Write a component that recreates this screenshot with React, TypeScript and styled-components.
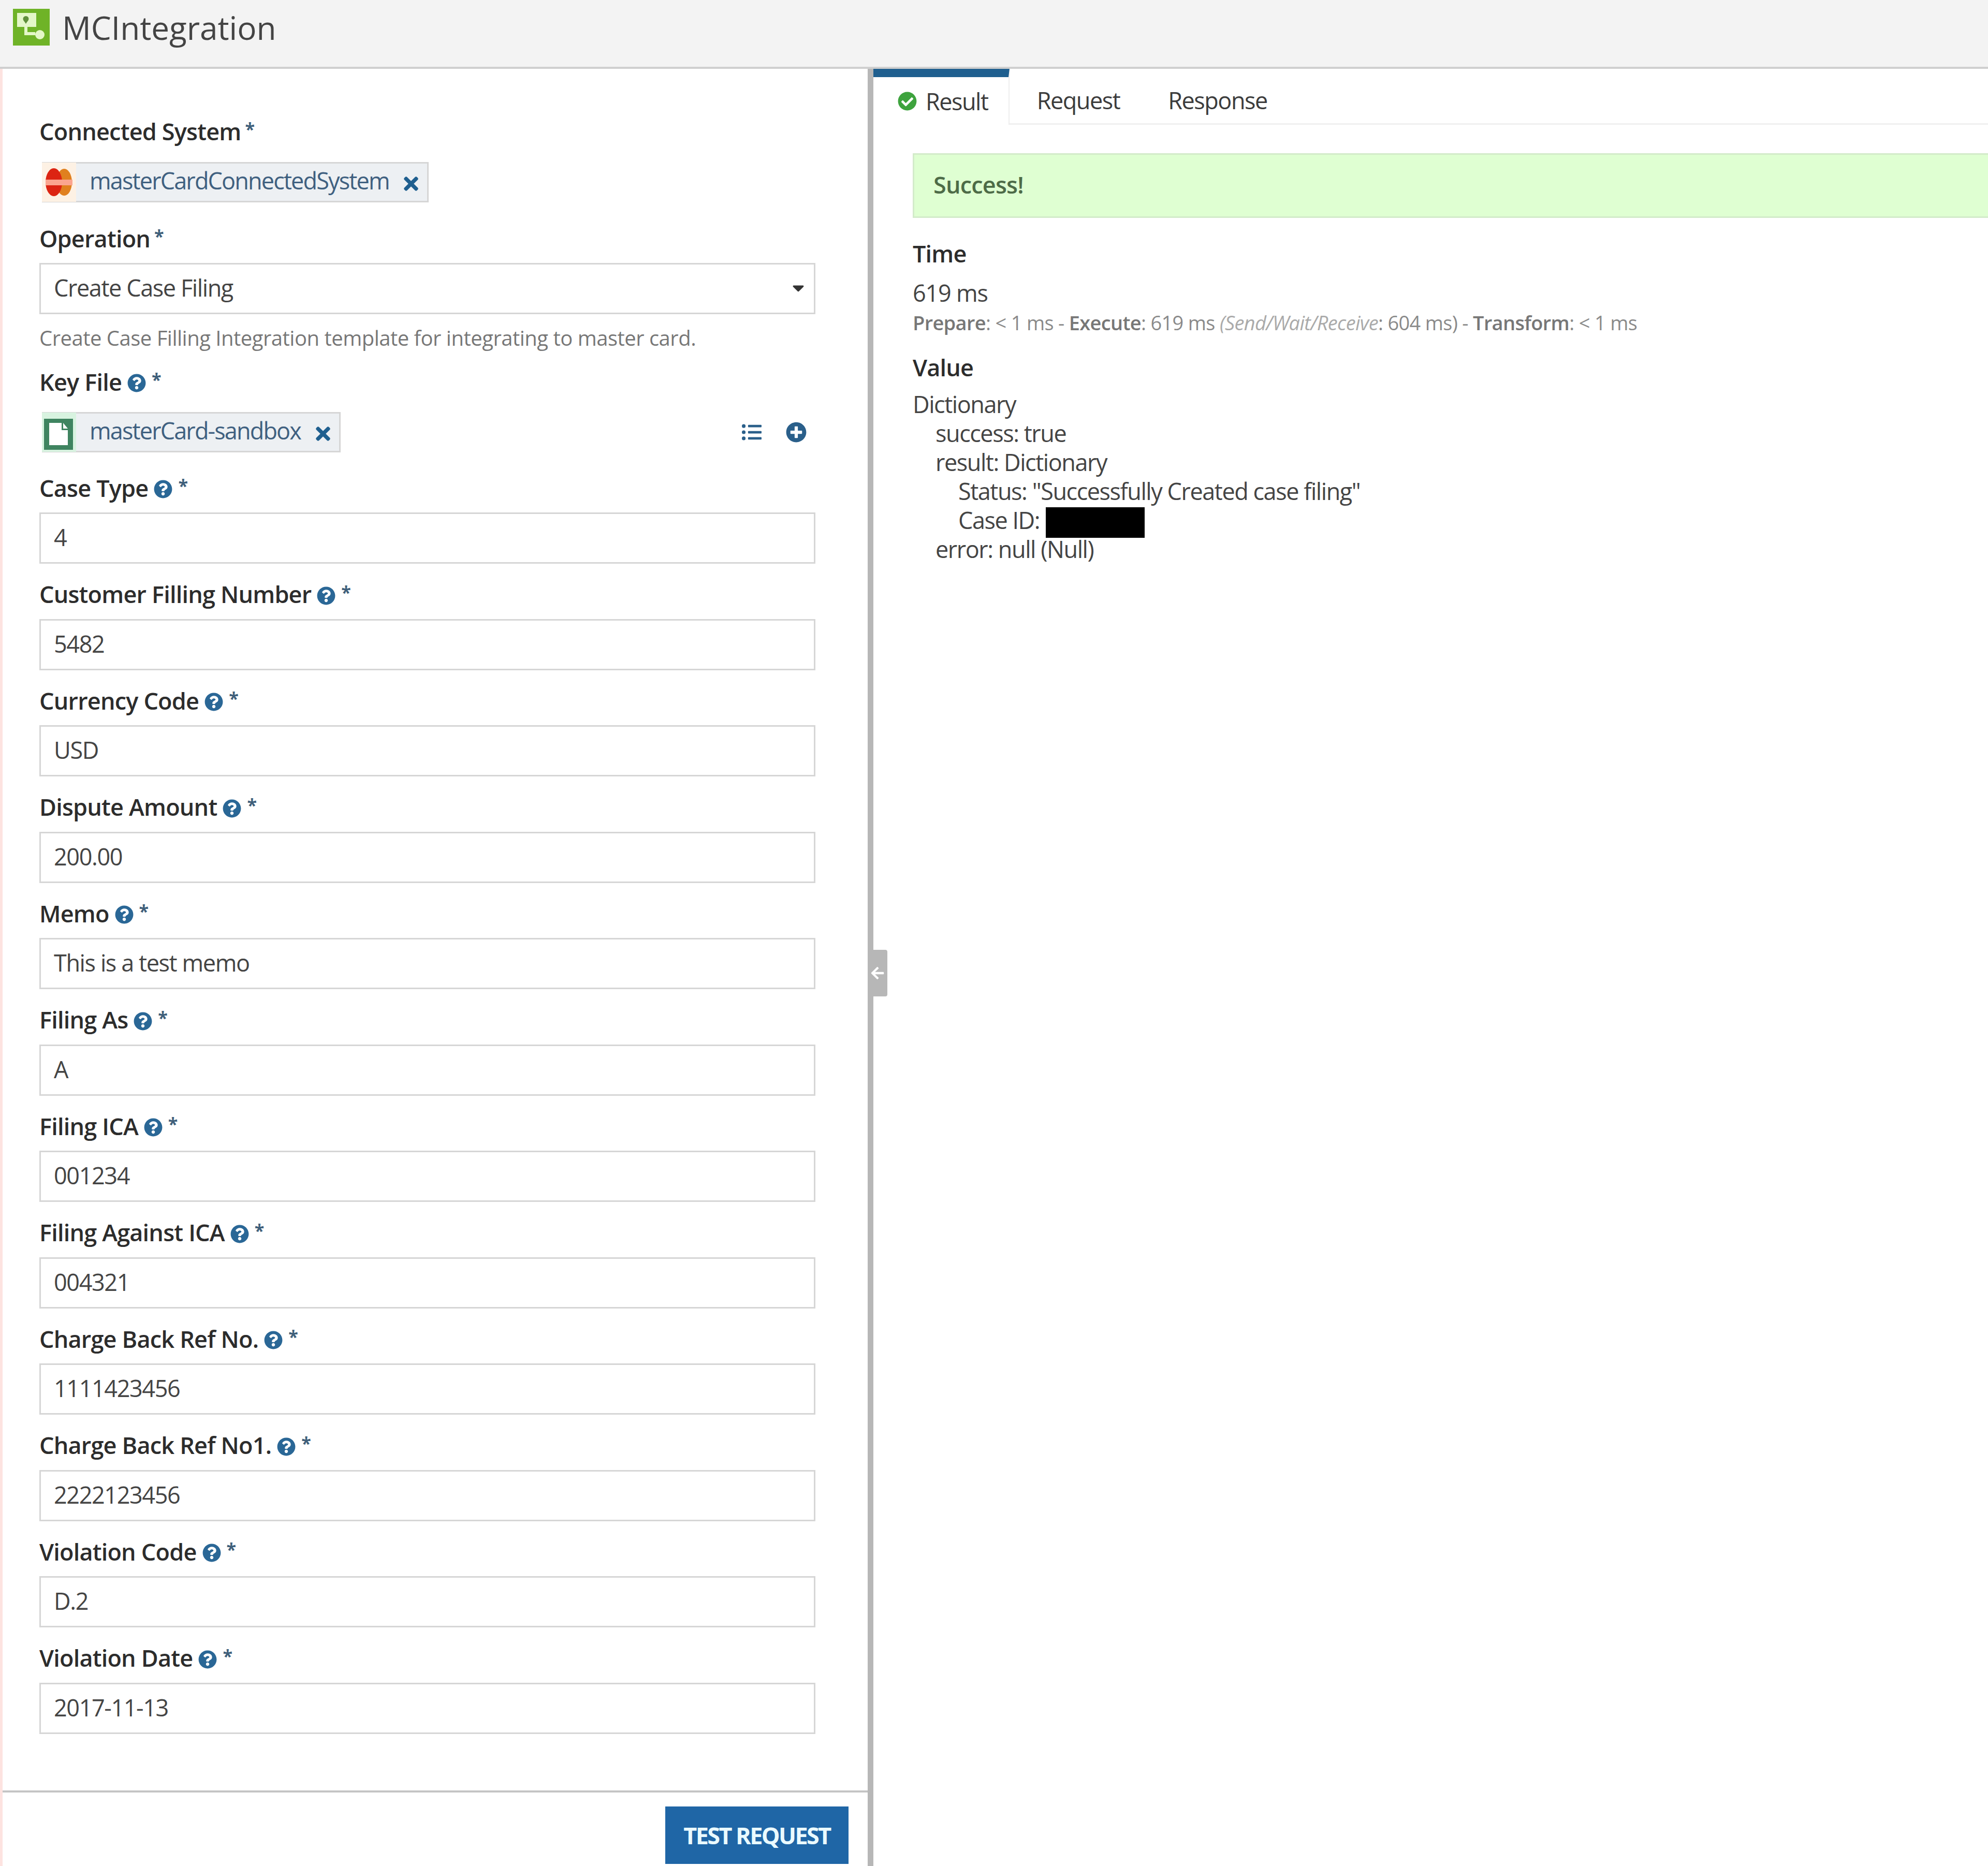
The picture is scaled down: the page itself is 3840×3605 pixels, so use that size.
import React from "react"
import styled, { createGlobalStyle } from "styled-components"
import { FaCheckCircle, FaPlusCircle, FaQuestionCircle, FaTimes, FaListUl, FaCaretDown, FaArrowLeft } from "react-icons/fa"

const GlobalStyle = createGlobalStyle`
  html, body {
    margin: 0;
    padding: 0;
    background: #fff;
  }
  body {
    width: 3840px;
    height: 3605px;
    overflow: hidden;
    font-family: "Open Sans", "Liberation Sans", sans-serif;
    color: #333;
  }
  * { box-sizing: border-box; }
`

const Page = styled.div`
  width: 3840px;
  height: 3605px;
  display: flex;
  flex-direction: column;
`

// 상단 제목
const Header = styled.header`
  height: 133px;
  flex: none;
  padding: 17px 0 0 25px;
  display: flex;
  align-items: flex-start;
  gap: 24px;
  background: #f3f3f3;
  border-bottom: 4px solid #cfcfcf;
`
const HeaderTitle = styled.h1`
  margin: 0;
  font-size: 62px;
  line-height: 72px;
  font-weight: 400;
  color: #444;
`

const Body = styled.div`
  flex: 1;
  min-height: 0;
  display: flex;
`

// 왼쪽 폼
const LeftPanel = styled.section`
  width: 1687px;
  flex: none;
  position: relative;
  display: flex;
  flex-direction: column;
  border-left: 5px solid #fde3e0;
  border-right: 11px solid #b7b7b7;
`
const Form = styled.div`
  flex: 1;
  min-height: 0;
  padding: 92px 0 0 71px;
  width: 1570px;
`
const Footer = styled.div`
  height: 146px;
  flex: none;
  padding: 27px 37px 0 0;
  display: flex;
  justify-content: flex-end;
  border-top: 4px solid #c4c4c4;
`
const TestButton = styled.button`
  width: 354px;
  height: 111px;
  padding: 0;
  border: none;
  background: #1f66a6;
  color: #eafaff;
  font-family: inherit;
  font-size: 45px;
  font-weight: 700;
  letter-spacing: -2.6px;
`

const Label = styled.div<{ $after?: number; $before?: number }>`
  height: 60px;
  padding-bottom: 4px;
  margin-top: ${(p) => p.$before ?? 0}px;
  margin-bottom: ${(p) => p.$after ?? 16}px;
  display: flex;
  align-items: center;
  gap: 11px;
  font-size: 45px;
  font-weight: 600;
  letter-spacing: -0.8px;
  color: #2c2c2c;
  white-space: nowrap;
`
const HelpIcon = styled(FaQuestionCircle)`
  width: 36px;
  height: 36px;
  color: #2a6796;
  margin-top: 6px;
`
const Required = styled.span<{ $tight?: boolean }>`
  font-size: 34px;
  font-weight: 700;
  color: #3f5f7a;
  margin-top: -8px;
  margin-left: ${(p) => (p.$tight ? "-3px" : "0")};
`

const Field = styled.div`
  margin-bottom: 30.5px;
`
const TextBox = styled.div`
  height: 99px;
  padding: 0 25px 4px;
  display: flex;
  align-items: center;
  justify-content: space-between;
  border: 3px solid #d6d6d6;
  background: #fff;
  font-size: 45px;
  letter-spacing: -1.4px;
  color: #444;
`
const HelpText = styled.div`
  margin: 21px 0 31px;
  height: 50px;
  line-height: 50px;
  font-size: 40px;
  letter-spacing: -0.5px;
  color: #777;
  white-space: nowrap;
`

const PickerRow = styled.div<{ $after: number }>`
  display: flex;
  align-items: center;
  justify-content: space-between;
  padding-right: 17px;
  margin-bottom: ${(p) => p.$after}px;
`
const Chip = styled.div<{ $width: number }>`
  width: ${(p) => p.$width}px;
  height: 78px;
  margin-left: 5px;
  display: flex;
  align-items: center;
  background: #edf0f3;
  border: 3px solid #d6d6d6;
  font-size: 45px;
  letter-spacing: -1.85px;
  color: #3f6080;
`
const ChipIcon = styled.svg`
  width: 66px;
  height: 76px;
  flex: none;
  margin-left: -3px;
`
const ChipText = styled.span`
  margin: -8px 0 0 26px;
  flex: 1;
  white-space: nowrap;
`
const ChipClose = styled(FaTimes)`
  width: 36px;
  height: 40px;
  flex: none;
  margin-right: 13px;
  margin-top: 6px;
  color: #1f5f8f;
`
const PickerActions = styled.div`
  display: flex;
  align-items: center;
  gap: 44px;
  color: #2a5f8a;
`
const ListIcon = styled(FaListUl)`
  width: 44px;
  height: 38px;
`
const PlusIcon = styled(FaPlusCircle)`
  width: 40px;
  height: 40px;
`
const Caret = styled(FaCaretDown)`
  width: 30px;
  height: 36px;
  color: #333;
  margin-right: -10px;
`

const CollapseHandle = styled.div`
  position: absolute;
  left: 1671px;
  top: 1702px;
  width: 38px;
  height: 90px;
  background: #b7b7b7;
  border-radius: 0 4px 4px 0;
  display: flex;
  align-items: center;
  justify-content: center;
  color: #fff;
`
const HandleArrow = styled(FaArrowLeft)`
  width: 28px;
  height: 28px;
`

// 오른쪽 결과
const RightPanel = styled.section`
  flex: 1;
  min-width: 0;
`
const TabBar = styled.div`
  height: 108px;
  display: flex;
  border-bottom: 3px solid #f0f0f0;
`
const Tab = styled.div<{ $active?: boolean; $width: number }>`
  width: ${(p) => p.$width}px;
  height: ${(p) => (p.$active ? "108px" : "105px")};
  flex: none;
  display: flex;
  align-items: center;
  justify-content: ${(p) => (p.$active ? "flex-start" : "center")};
  gap: 17px;
  padding-left: ${(p) => (p.$active ? "47px" : "0")};
  border-top: 16px solid ${(p) => (p.$active ? "#1f5f8f" : "#fff")};
  border-right: ${(p) => (p.$active ? "2px solid #eeeeee" : "none")};
  background: #fff;
  font-size: 45px;
  letter-spacing: -1.5px;
  color: #3c3c3c;
`
const TabCheck = styled(FaCheckCircle)`
  width: 37px;
  height: 37px;
  color: #3ea33e;
`
const ResultBody = styled.div`
  padding: 55px 0 0 76px;
`
const Banner = styled.div`
  height: 125px;
  padding: 0 0 5px 37px;
  display: flex;
  align-items: center;
  background: #dfffd2;
  border: 3px solid #d3ebca;
  border-right: none;
  font-size: 45px;
  font-weight: 600;
  letter-spacing: -0.8px;
  color: #4d6b47;
`
const SectionTitle = styled.div<{ $top: number }>`
  height: 60px;
  line-height: 60px;
  margin-top: ${(p) => p.$top}px;
  font-size: 45px;
  font-weight: 600;
  letter-spacing: -0.8px;
  color: #2c2c2c;
`
const TimeValue = styled.div`
  height: 60px;
  line-height: 60px;
  margin-top: 16px;
  font-size: 45px;
  letter-spacing: -1.2px;
  color: #444;
`
const TimeDetail = styled.div`
  height: 44px;
  line-height: 44px;
  margin-top: 5px;
  margin-bottom: 35px;
  font-size: 38px;
  letter-spacing: -0.68px;
  color: #8a8a8a;
  white-space: nowrap;
  b {
    font-weight: 600;
    color: #777;
  }
  i {
    color: #aaa;
  }
`
const ValueTree = styled.div`
  margin-top: 13px;
  font-size: 45px;
  letter-spacing: -1.45px;
  color: #444;
`
const TreeLine = styled.div<{ $depth: number }>`
  height: 56px;
  line-height: 56px;
  padding-left: ${(p) => p.$depth * 44}px;
  display: flex;
  white-space: pre;
`
const Redacted = styled.span`
  width: 191px;
  height: 59px;
  margin: 3px 0 0 12px;
  background: #000;
`

type FieldItem = {
  label: string;
  value: string;
}

const fields: FieldItem[] = [
  { label: "Case Type", value: "4" },
  { label: "Customer Filling Number", value: "5482" },
  { label: "Currency Code", value: "USD" },
  { label: "Dispute Amount", value: "200.00" },
  { label: "Memo", value: "This is a test memo" },
  { label: "Filing As", value: "A" },
  { label: "Filing ICA", value: "001234" },
  { label: "Filing Against ICA", value: "004321" },
  { label: "Charge Back Ref No.", value: "1111423456" },
  { label: "Charge Back Ref No1.", value: "2222123456" },
  { label: "Violation Code", value: "D.2" },
  { label: "Violation Date", value: "2017-11-13" },
]

const AppLogo = () => (
  <svg width="71" height="71" viewBox="0 0 71 71" style={{ flex: "none" }}>
    <rect width="71" height="71" fill="#6fb327" />
    <rect x="8" y="8" width="37" height="27" fill="#e4f7c8" />
    <path d="M25 14a5.500 5.500 0 0 1 5.500 5.500c0 3-3 5-5.500 9.500c-2.500-4.500-5.500-6.500-5.500-9.500A5.500 5.500 0 0 1 25 14z" fill="#5f8f3a" />
    <path d="M25 35v13h18" fill="none" stroke="#e4f7c8" strokeWidth="6" />
    <circle cx="52" cy="50" r="9" fill="#e4f7c8" />
  </svg>
)

const CardLogo = () => (
  <ChipIcon viewBox="0 0 66 76">
    <rect width="66" height="76" fill="#fdf1e4" />
    <ellipse cx="43" cy="38" rx="15" ry="26" fill="#e0801f" />
    <ellipse cx="23" cy="38" rx="16" ry="27" fill="#dc2412" />
    <rect x="7" y="33" width="52" height="11" fill="#fba58f" />
  </ChipIcon>
)

const DocLogo = () => (
  <ChipIcon viewBox="0 0 66 76">
    <rect width="66" height="76" fill="#d8f3e0" />
    <rect x="4" y="12" width="56" height="60" fill="#3f8460" />
    <path d="M14 20h24v14h12v29H14z" fill="#fff" />
    <path d="M41 20l9 11h-9z" fill="#fff" />
  </ChipIcon>
)

const App = () => {
  return (
    <>
      <GlobalStyle />
      <Page>
        <Header>
          <AppLogo />
          <HeaderTitle>MCIntegration</HeaderTitle>
        </Header>
        <Body>
          <LeftPanel>
            <Form>
              <Label $after={28}>Connected System<Required $tight>*</Required></Label>
              <PickerRow $after={41}>
                <Chip $width={747}>
                  <CardLogo />
                  <ChipText>masterCardConnectedSystem</ChipText>
                  <ChipClose />
                </Chip>
              </PickerRow>
              <Label>Operation<Required $tight>*</Required></Label>
              <TextBox>
                Create Case Filing
                <Caret />
              </TextBox>
              <HelpText>Create Case Filling Integration template for integrating to master card.</HelpText>
              <Label $after={27}>Key File<HelpIcon /><Required>*</Required></Label>
              <PickerRow $after={40}>
                <Chip $width={577}>
                  <DocLogo />
                  <ChipText>masterCard-sandbox</ChipText>
                  <ChipClose />
                </Chip>
                <PickerActions>
                  <ListIcon />
                  <PlusIcon />
                </PickerActions>
              </PickerRow>
              {fields.map((field) => (
                <Field key={field.label}>
                  <Label>{field.label}<HelpIcon /><Required>*</Required></Label>
                  <TextBox>{field.value}</TextBox>
                </Field>
              ))}
            </Form>
            <Footer>
              <TestButton>TEST REQUEST</TestButton>
            </Footer>
            <CollapseHandle>
              <HandleArrow />
            </CollapseHandle>
          </LeftPanel>
          <RightPanel>
            <TabBar>
              <Tab $active $width={263}>
                <TabCheck />
                Result
              </Tab>
              <Tab $width={266}>Request</Tab>
              <Tab $width={272}>Response</Tab>
            </TabBar>
            <ResultBody>
              <Banner>Success!</Banner>
              <SectionTitle $top={39}>Time</SectionTitle>
              <TimeValue>619 ms</TimeValue>
              <TimeDetail>
                <b>Prepare</b>: &lt; 1 ms - <b>Execute</b>: 619 ms <i>(Send/Wait/Receive</i>: 604 ms) - <b>Transform</b>: &lt; 1 ms
              </TimeDetail>
              <SectionTitle $top={0}>Value</SectionTitle>
              <ValueTree>
                <TreeLine $depth={0}>Dictionary</TreeLine>
                <TreeLine $depth={1}>success: true</TreeLine>
                <TreeLine $depth={1}>result: Dictionary</TreeLine>
                <TreeLine $depth={2}>Status: "Successfully Created case filing"</TreeLine>
                <TreeLine $depth={2}>Case ID:<Redacted /></TreeLine>
                <TreeLine $depth={1}>error: null (Null)</TreeLine>
              </ValueTree>
            </ResultBody>
          </RightPanel>
        </Body>
      </Page>
    </>
  )
}

export default App
